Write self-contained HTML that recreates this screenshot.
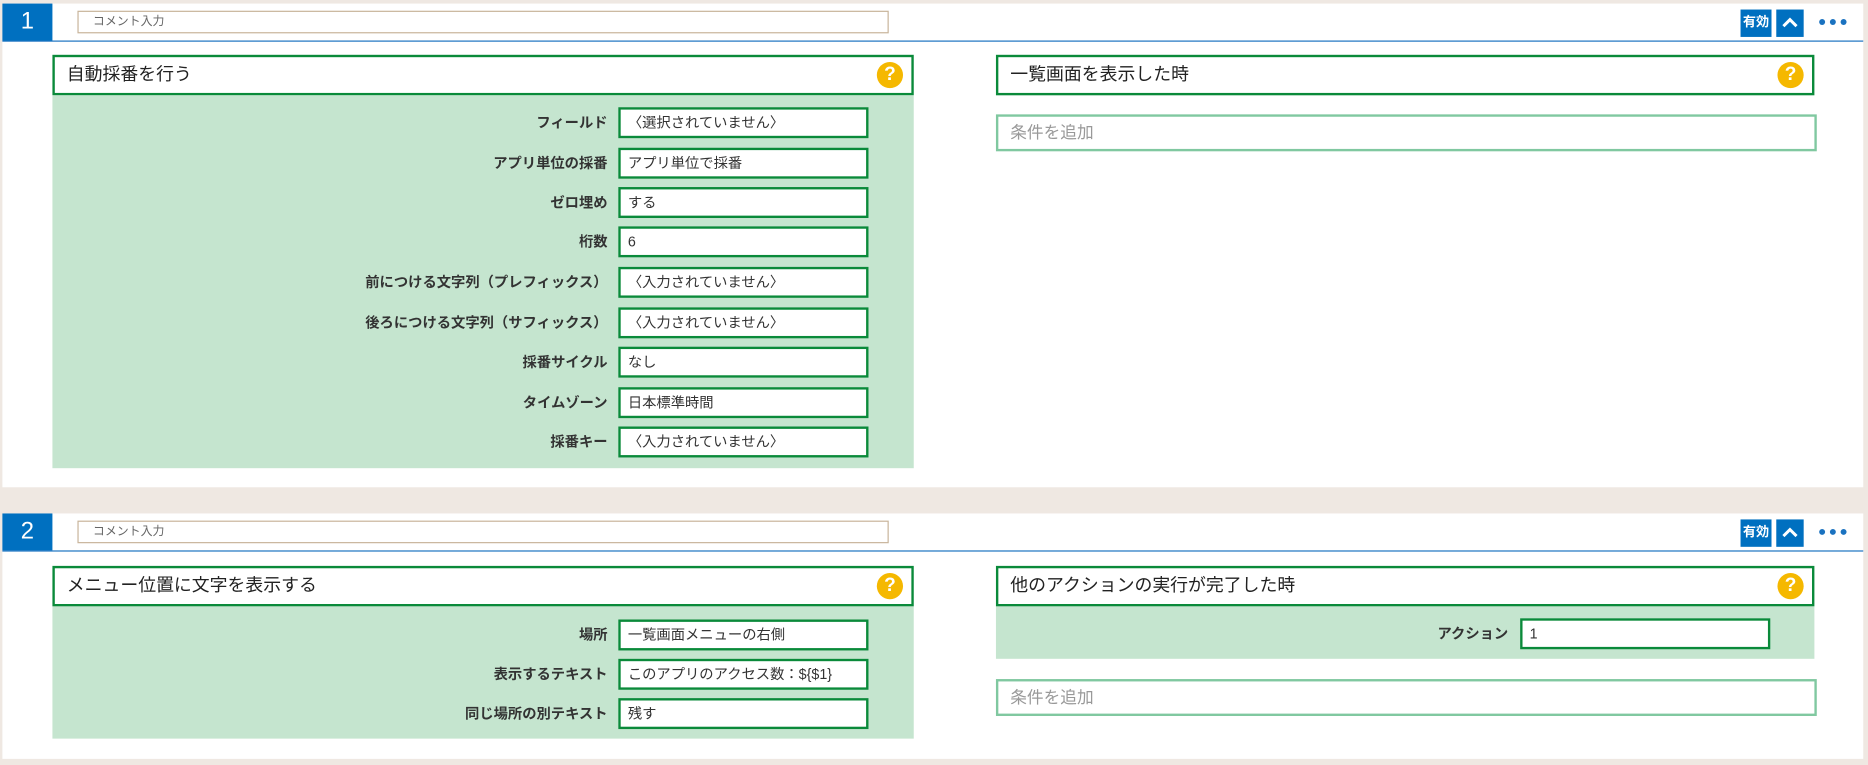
<!DOCTYPE html>
<html><head><meta charset="utf-8"><style>
*{box-sizing:border-box;margin:0;padding:0}
html,body{width:1868px;height:765px;overflow:hidden}
body{background:#efe8e2;font-family:"Liberation Sans","Noto Sans CJK JP",sans-serif;color:#333}
#w{position:absolute;left:0;top:0;width:1568px;height:642px;transform:scale(1.19133);transform-origin:0 0}
.card{position:absolute;left:2px;width:1562px;background:#fff}
.num{position:absolute;left:0;top:0;width:42px;height:31px;background:#0070c0;color:#fff;font-size:20px;text-align:center;line-height:31px}
.line{position:absolute;left:0;right:0;top:31px;height:1px;background:#1a72c0}
.cmt{position:absolute;left:63px;top:6px;width:681px;height:19px;border:1px solid #c8b49a;font-size:10px;color:#666;padding-left:12px;line-height:17px}
.btn{position:absolute;top:5px;height:23px;background:#0070c0;color:#fff;font-size:11px;font-weight:bold;text-align:center;line-height:23px}
.dots{position:absolute;top:13px;left:1525px}
.dots i{display:inline-block;width:5px;height:5px;border-radius:3px;background:#1a72c0;margin-right:4px;vertical-align:top}
.ph{position:absolute;height:34px;border:2px solid #0a8a3a;background:#fff;font-size:15px;padding-left:10px;line-height:30px;color:#222}
.help{position:absolute;right:7px;top:4px;width:22px;height:22px;border-radius:11px;background:#f5b800;color:#fff;font-weight:bold;font-size:16px;text-align:center;line-height:22px}
.pb{position:absolute;background:#c5e5cf}
.lbl{position:absolute;text-align:right;font-size:12px;font-weight:bold;line-height:26px;color:#333}
.inp{position:absolute;height:26px;border:2px solid #0a8a3a;background:#fff;font-size:12px;line-height:22px;padding-left:6px;color:#333}
.add{position:absolute;height:31px;border:2px solid #80c8a0;background:#fff;font-size:14px;color:#999;padding-left:10px;line-height:27px}
</style></head><body><div id="w">

<div class="card" style="top:3px;height:406px">
<div class="num">1</div><div class="line"></div>
<div class="cmt">コメント入力</div>
<div class="btn" style="left:1459px;width:26px">有効</div>
<div class="btn" style="left:1489px;width:23px"><svg width="23" height="23"><path d="M6 14 L11.5 8.5 L17 14" stroke="#fff" stroke-width="2.5" fill="none"/></svg></div>
<div class="dots"><i></i><i></i><i></i></div>
</div>
<div class="ph" style="left:44px;top:46px;width:723px">自動採番を行う<div class="help">?</div></div>
<div class="pb" style="left:44px;top:80px;width:723px;height:313px"></div>
<div class="ph" style="left:836px;top:46px;width:687px">一覧画面を表示した時<div class="help">?</div></div>
<div class="add" style="left:836px;top:96px;width:689px">条件を追加</div>

<div class="lbl" style="left:30px;width:480px;top:90px">フィールド</div><div class="inp" style="left:519px;top:90px;width:210px">〈選択されていません〉</div>
<div class="lbl" style="left:30px;width:480px;top:124px">アプリ単位の採番</div><div class="inp" style="left:519px;top:124px;width:210px">アプリ単位で採番</div>
<div class="lbl" style="left:30px;width:480px;top:157px">ゼロ埋め</div><div class="inp" style="left:519px;top:157px;width:210px">する</div>
<div class="lbl" style="left:30px;width:480px;top:190px">桁数</div><div class="inp" style="left:519px;top:190px;width:210px">6</div>
<div class="lbl" style="left:30px;width:480px;top:224px">前につける文字列（プレフィックス）</div><div class="inp" style="left:519px;top:224px;width:210px">〈入力されていません〉</div>
<div class="lbl" style="left:30px;width:480px;top:258px">後ろにつける文字列（サフィックス）</div><div class="inp" style="left:519px;top:258px;width:210px">〈入力されていません〉</div>
<div class="lbl" style="left:30px;width:480px;top:291px">採番サイクル</div><div class="inp" style="left:519px;top:291px;width:210px">なし</div>
<div class="lbl" style="left:30px;width:480px;top:325px">タイムゾーン</div><div class="inp" style="left:519px;top:325px;width:210px">日本標準時間</div>
<div class="lbl" style="left:30px;width:480px;top:358px">採番キー</div><div class="inp" style="left:519px;top:358px;width:210px">〈入力されていません〉</div>

<div class="card" style="top:431px;height:206px">
<div class="num">2</div><div class="line"></div>
<div class="cmt">コメント入力</div>
<div class="btn" style="left:1459px;width:26px">有効</div>
<div class="btn" style="left:1489px;width:23px"><svg width="23" height="23"><path d="M6 14 L11.5 8.5 L17 14" stroke="#fff" stroke-width="2.5" fill="none"/></svg></div>
<div class="dots"><i></i><i></i><i></i></div>
</div>
<div class="ph" style="left:44px;top:475px;width:723px">メニュー位置に文字を表示する<div class="help">?</div></div>
<div class="pb" style="left:44px;top:509px;width:723px;height:111px"></div>
<div class="ph" style="left:836px;top:475px;width:687px">他のアクションの実行が完了した時<div class="help">?</div></div>
<div class="pb" style="left:836px;top:509px;width:687px;height:44px"></div>
<div class="add" style="left:836px;top:570px;width:689px">条件を追加</div>

<div class="lbl" style="left:30px;width:480px;top:520px">場所</div><div class="inp" style="left:519px;top:520px;width:210px">一覧画面メニューの右側</div>
<div class="lbl" style="left:30px;width:480px;top:553px">表示するテキスト</div><div class="inp" style="left:519px;top:553px;width:210px">このアプリのアクセス数：${$1}</div>
<div class="lbl" style="left:30px;width:480px;top:586px">同じ場所の別テキスト</div><div class="inp" style="left:519px;top:586px;width:210px">残す</div>
<div class="lbl" style="left:786px;width:480px;top:519px">アクション</div><div class="inp" style="left:1276px;top:519px;width:210px">1</div>
</div></body></html>
